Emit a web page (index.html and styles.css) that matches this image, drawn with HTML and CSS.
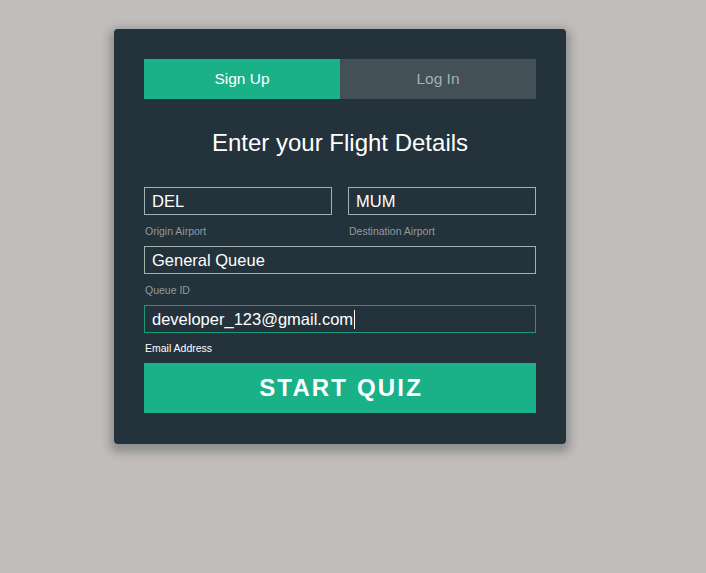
FILE: index.html
```html
<!DOCTYPE html>
<html>
<head>
<meta charset="utf-8">
<link rel="stylesheet" href="styles.css">
</head>
<body>
<div class="card">
  <div class="tabs">
    <div class="tab active">Sign Up</div>
    <div class="tab">Log In</div>
  </div>
  <h1 class="title">Enter your Flight Details</h1>
  <div class="row">
    <div class="group">
      <div class="field">DEL</div>
      <div class="label">Origin Airport</div>
    </div>
    <div class="group">
      <div class="field">MUM</div>
      <div class="label">Destination Airport</div>
    </div>
  </div>
  <div class="group">
    <div class="field">General Queue</div>
    <div class="label">Queue ID</div>
  </div>
  <div class="group">
    <div class="field focus">developer_123@gmail.com<span class="caret"></span></div>
    <div class="label active">Email Address</div>
  </div>
  <button class="submit">START QUIZ</button>
</div>
</body>
</html>
```
FILE: styles.css
```css
html, body {
  margin: 0;
  padding: 0;
}
body {
  background: #c1bdba;
  font-family: "Liberation Sans", Arial, sans-serif;
  height: 573px;
}
.card {
  width: 392px;
  margin: 29px 0 0 114px;
  padding: 30px 30px 31px;
  background: #24323b;
  border-radius: 4px;
  box-shadow: 0 4px 10px 4px rgba(19, 35, 47, 0.3);
}
.tabs {
  display: flex;
  height: 40px;
}
.tab {
  flex: 1;
  display: flex;
  align-items: center;
  justify-content: center;
  font-size: 15.5px;
  background: #435058;
  color: #a0b3b0;
}
.tab.active {
  background: #1ab188;
  color: #ffffff;
}
.title {
  margin: 29px 0;
  font-size: 24px;
  line-height: 30px;
  font-weight: normal;
  text-align: center;
  color: #ffffff;
}
.row {
  display: flex;
  gap: 16px;
}
.row .group {
  flex: 1;
}
.field {
  height: 26px;
  border: 1px solid #a0b3b0;
  padding: 0 7px;
  color: #ffffff;
  font-size: 16.5px;
  line-height: 26px;
  white-space: nowrap;
}
.field.focus {
  border-color: #1a9a78;
}
.caret {
  display: inline-block;
  width: 1px;
  height: 19px;
  background: #ffffff;
  vertical-align: -4px;
  margin-left: 1px;
}
.label {
  margin: 10px 0 9px 1px;
  font-size: 10.5px;
  line-height: 12px;
  color: #8e9b9c;
}
.label.active {
  margin-top: 9px;
  color: #ffffff;
}
.submit {
  display: block;
  width: 392px;
  height: 50px;
  margin: 0;
  border: 0;
  padding: 0;
  background: #1ab188;
  color: #ffffff;
  font-family: "Liberation Sans", Arial, sans-serif;
  font-size: 24px;
  font-weight: bold;
  letter-spacing: 0.09em;
  text-indent: 0.09em;
}
```
